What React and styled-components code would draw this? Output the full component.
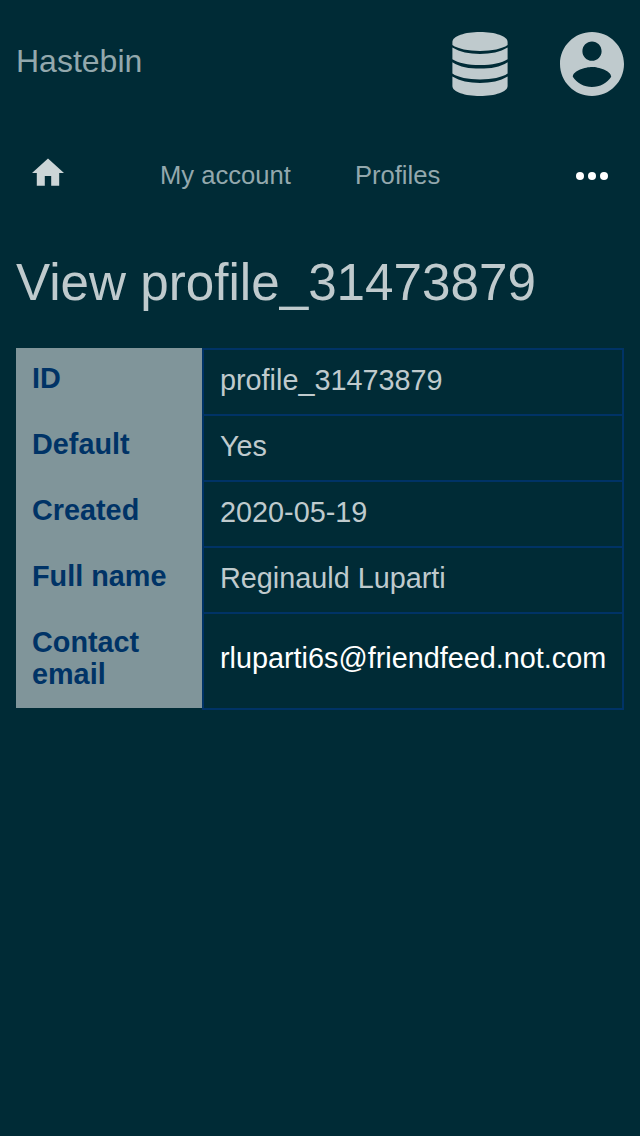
import React from "react";
import styled, { createGlobalStyle } from "styled-components";

const GlobalStyle = createGlobalStyle`
  *, *::before, *::after { box-sizing: border-box; }
  html, body { margin: 0; background: #002b36; }
  body { font-family: "Liberation Sans", Arial, sans-serif; color: #bfcacd; }
`;

const Page = styled.div`
  min-height: 1136px;
  padding: 0 16px;
`;

const Header = styled.header`
  display: flex;
  align-items: center;
  height: 128px;
`;

const Brand = styled.a`
  flex: 1;
  padding-bottom: 6px;
  font-size: 32px;
  line-height: 38px;
  color: #93a8ad;
`;

const HeaderIcons = styled.div`
  display: flex;
  gap: 52px;
`;

const Icon = styled.svg`
  display: block;
  width: ${(p) => p.$w}px;
  height: ${(p) => p.$h}px;
  fill: ${(p) => p.$color || "#bfcacd"};
`;

const Nav = styled.nav`
  display: flex;
  align-items: center;
  height: 96px;
  padding: 0 16px;
`;

const HomeLink = styled.a`
  padding-bottom: 8px;
  margin-right: 96px;
`;

const NavLink = styled.a`
  margin-right: 64px;
  padding-bottom: 2px;
  font-size: 25.6px;
  line-height: 32px;
  color: #93a8ad;
`;

const MoreButton = styled.a`
  margin-left: auto;
`;

const Title = styled.h1`
  margin: 0;
  padding: 29px 0 35px;
  font-size: 51.2px;
  font-weight: 400;
  line-height: 60px;
`;

const Details = styled.dl`
  display: grid;
  grid-template-columns: 186px 1fr;
  margin: 0;
  font-size: 28.8px;
  line-height: 32px;
`;

const Label = styled.dt`
  padding: 14px 16px;
  background: #80959a;
  color: #003366;
  font-weight: 700;
`;

const Value = styled.dd`
  display: flex;
  align-items: center;
  height: ${(p) => (p.$last ? "98px" : "66px")};
  margin: 0 0 ${(p) => (p.$last ? "-2px" : "0")};
  padding: 0 14px ${(p) => (p.$last ? "6px" : "4px")} 16px;
  border: 2px solid #003366;
  border-bottom-width: ${(p) => (p.$last ? "2px" : "0")};
`;

const MailLink = styled.a`
  color: #ffffff;
`;

const rows = [
  ["ID", "profile_31473879"],
  ["Default", "Yes"],
  ["Created", "2020-05-19"],
  ["Full name", "Reginauld Luparti"],
  ["Contact email", <MailLink key="mail">rluparti6s@friendfeed.not.com</MailLink>],
];

export default function App() {
  return (
    <Page>
      <GlobalStyle />
      <Header>
        <Brand>Hastebin</Brand>
        <HeaderIcons>
          <Icon $w={56} $h={64} viewBox="0 0 56 64">
            <path d="M.4 10C.4 4 13 0 28 0S55.600 4 55.600 10V13C50 17 40 18.900 28 18.900S6 17 .4 13Z" />
            <path d="M.4 15.600C8 20.300 17 21.900 28 21.900S48 20.300 55.600 15.600V27.200C50 31 40 33 28 33S6 31 .4 27.200Z" />
            <path d="M.4 30.200C8 35 17 36.600 28 36.600S48 35 55.600 30.200V41.500C50 45.500 40 47.400 28 47.400S6 45.500 .4 41.500Z" />
            <path d="M.4 44.600C8 49.300 17 50.900 28 50.900S48 49.300 55.600 44.600V54C55.600 60 43 64 28 64S.4 60 .4 54Z" />
          </Icon>
          <Icon $w={64} $h={64} viewBox="2 2 20 20">
            <path d="M12 2C6.480 2 2 6.480 2 12s4.480 10 10 10 10-4.480 10-10S17.520 2 12 2zm0 3c1.660 0 3 1.340 3 3s-1.340 3-3 3-3-1.340-3-3 1.340-3 3-3zm0 14.200c-2.500 0-4.710-1.280-6-3.220.03-1.990 4-3.080 6-3.080 1.990 0 5.970 1.090 6 3.080-1.290 1.940-3.500 3.220-6 3.220z" />
          </Icon>
        </HeaderIcons>
      </Header>
      <Nav>
        <HomeLink>
          <Icon $w={32} $h={28} $color="#ccd5d7" viewBox="2 2.700 20 17.500">
            <path d="M10 20v-6h4v6h5v-8h3L12 3 2 12h3v8z" />
          </Icon>
        </HomeLink>
        <NavLink>My account</NavLink>
        <NavLink>Profiles</NavLink>
        <MoreButton>
          <Icon $w={32} $h={8} $color="#ffffff" viewBox="0 0 32 8">
            <circle cx="4" cy="4" r="4" />
            <circle cx="16" cy="4" r="4" />
            <circle cx="28" cy="4" r="4" />
          </Icon>
        </MoreButton>
      </Nav>
      <Title>View profile_31473879</Title>
      <Details>
        {rows.map(([label, value], i) => (
          <React.Fragment key={label}>
            <Label>{label}</Label>
            <Value $last={i === rows.length - 1}>{value}</Value>
          </React.Fragment>
        ))}
      </Details>
    </Page>
  );
}
